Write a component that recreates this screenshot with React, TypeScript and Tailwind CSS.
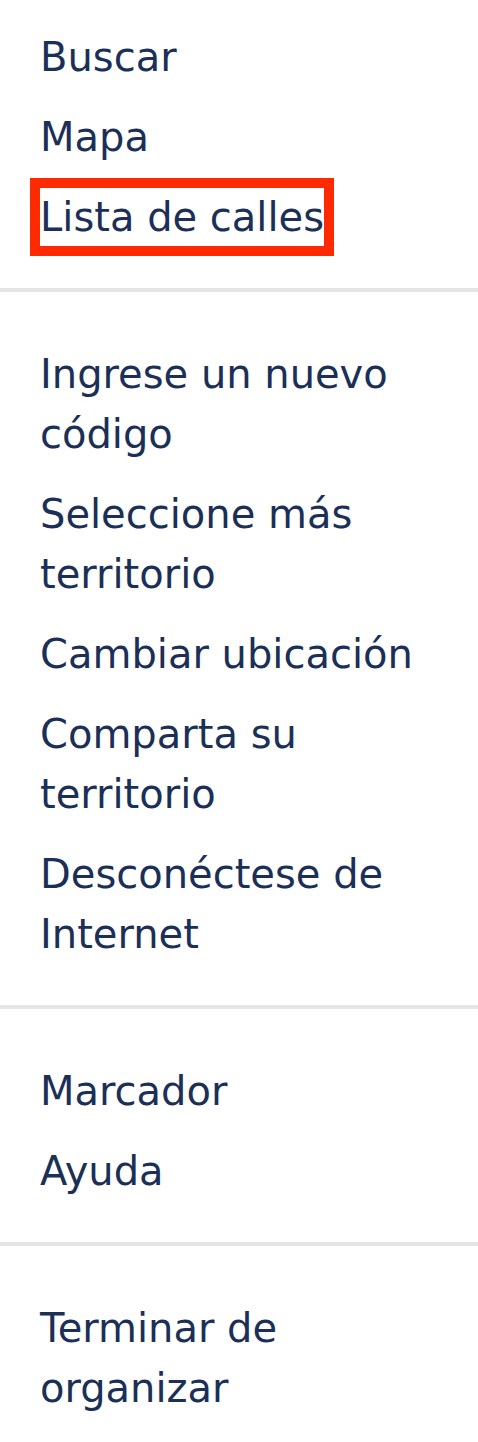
import React from "react";

type Item = { label: string; focused?: boolean };

const sections: Item[][] = [
  [{ label: "Buscar" }, { label: "Mapa" }, { label: "Lista de calles", focused: true }],
  [
    { label: "Ingrese un nuevo código" },
    { label: "Seleccione más territorio" },
    { label: "Cambiar ubicación" },
    { label: "Comparta su territorio" },
    { label: "Desconéctese de Internet" },
  ],
  [{ label: "Marcador" }, { label: "Ayuda" }],
  [{ label: "Terminar de organizar" }],
];

function MenuItem({ item }: { item: Item }) {
  return (
    <li className="py-[10px] pl-[40px] pr-[60px] leading-[60px]">
      {item.focused ? (
        <a
          href="#"
          className="inline-block h-[58px] leading-[58px] outline outline-[10px] outline-[#ff2a00]"
        >
          {item.label}
        </a>
      ) : (
        <a href="#">{item.label}</a>
      )}
    </li>
  );
}

export default function App() {
  return (
    <nav
      className="w-[478px] min-h-[1442px] bg-white text-[40px] text-[#1b2f57]"
      style={{ fontFamily: '"DejaVu Sans", sans-serif' }}
    >
      {sections.map((items, i) => (
        <div key={i}>
          {i > 0 && <div className="h-[4px] bg-[#e5e5e5]" />}
          <ul className={i === 0 ? "pt-[17px] pb-[31px]" : "pt-[42px] pb-[31px]"}>
            {items.map((item) => (
              <MenuItem key={item.label} item={item} />
            ))}
          </ul>
        </div>
      ))}
    </nav>
  );
}
